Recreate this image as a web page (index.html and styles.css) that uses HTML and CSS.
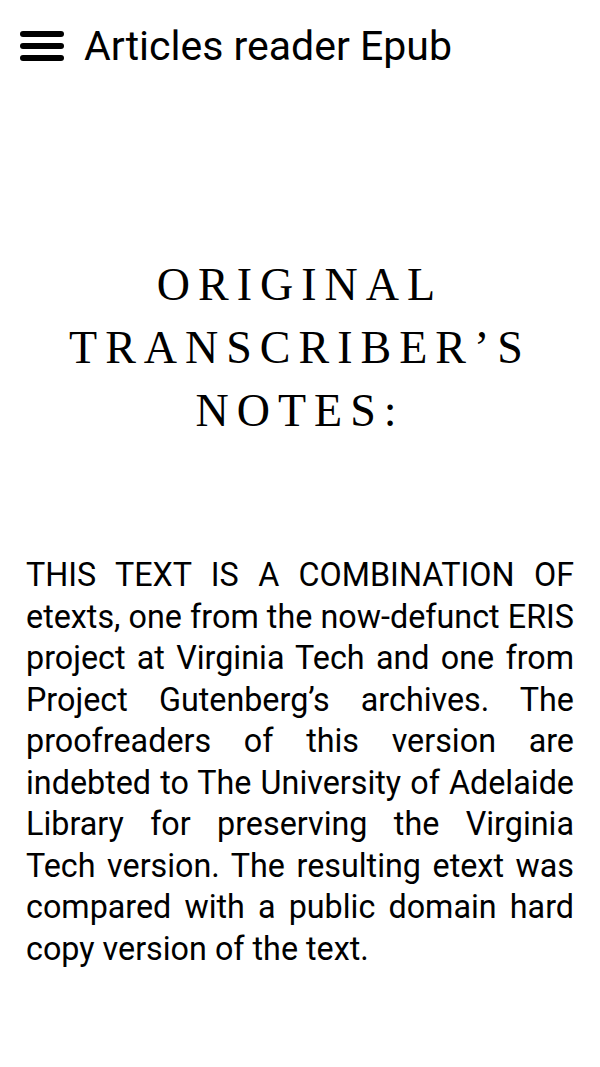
FILE: index.html
```html
<!DOCTYPE html>
<html>
<head>
<meta charset="utf-8">
<link rel="stylesheet" href="styles.css">
</head>
<body>
<header class="appbar">
  <svg class="menu" width="44" height="34" viewBox="0 0 44 34">
    <rect x="0" y="2" width="44" height="6" rx="3" fill="#000"/>
    <rect x="0" y="14" width="44" height="6" rx="3" fill="#000"/>
    <rect x="0" y="26" width="44" height="6" rx="3" fill="#000"/>
  </svg>
  <h1 class="title">Articles reader Epub</h1>
</header>
<main class="content">
  <h2 class="heading">Original Transcriber’s Notes:</h2>
  <p class="body">THIS TEXT IS A COMBINATION OF etexts, one from the now-defunct ERIS project at Virginia Tech and one from Project Gutenberg’s archives. The proofreaders of this version are indebted to The University of Adelaide Library for preserving the Virginia Tech version. The resulting etext was compared with a public domain hard copy version of the text.</p>
</main>
</body>
</html>
```
FILE: styles.css
```css
html, body {
  margin: 0;
  padding: 0;
  background: #fff;
  color: #000;
}
.appbar {
  display: flex;
  align-items: center;
  height: 92px;
  padding-left: 20px;
  gap: 20px;
}
.menu {
  display: block;
}
.title {
  margin: 0;
  font-family: Roboto, "Liberation Sans", sans-serif;
  font-weight: 400;
  font-size: 41px;
  line-height: 1;
}
.content {
  padding: 0 26px;
}
.heading {
  margin: 161px 0 0;
  font-family: "Liberation Serif", serif;
  font-weight: 400;
  font-size: 46px;
  line-height: 63px;
  letter-spacing: 8px;
  text-transform: uppercase;
  text-align: center;
}
.body {
  margin: 113px 0 0;
  font-family: Roboto, "Liberation Sans", sans-serif;
  font-size: 32.3px;
  line-height: 41.5px;
  text-align: justify;
}
```
